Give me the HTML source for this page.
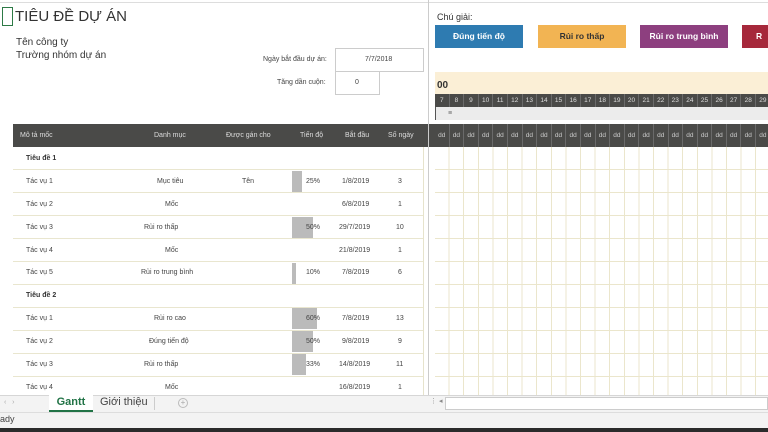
<!DOCTYPE html>
<html><head><meta charset="utf-8"><style>
*{margin:0;padding:0;box-sizing:border-box}
body{width:768px;height:432px;overflow:hidden;background:#fff;font-family:"Liberation Sans","DejaVu Sans",sans-serif;position:relative;color:#333}
.a{position:absolute;white-space:nowrap}
.s{font-size:7px;color:#444}
.hdr{background:#4a4a48}
.flex{display:flex}
.flex div{width:14.6px;flex:none;text-align:center;border-right:1px solid #6a6a6a}
</style></head><body>
<div class="a" style="left:0;top:0;width:768px;height:3px;border-bottom:1px solid #ddd"></div>
<div class="a" style="left:2px;top:7px;width:11px;height:19px;border:1px solid #2d7a46"></div>
<div class="a" style="left:15px;top:8px;font-size:15px;color:#333">TIÊU ĐỀ DỰ ÁN</div>
<div class="a" style="left:16px;top:37px;font-size:10px;color:#333">Tên công ty</div>
<div class="a" style="left:16px;top:50px;font-size:10px;color:#333">Trường nhóm dự án</div>
<div class="a s" style="left:263px;top:56px">Ngày bắt đầu dự án:</div>
<div class="a" style="left:335px;top:48px;width:89px;height:24px;border:1px solid #ccc"></div>
<div class="a s" style="left:365px;top:56px">7/7/2018</div>
<div class="a s" style="left:277px;top:79px">Tăng dần cuộn:</div>
<div class="a" style="left:335px;top:71px;width:45px;height:24px;border:1px solid #ccc"></div>
<div class="a s" style="left:355px;top:79px">0</div>

<div class="a hdr" style="left:13px;top:124px;width:422px;height:23px"></div>
<div class="a s" style="left:20px;top:132px;color:#ddd">Mô tả mốc</div>
<div class="a s" style="left:154px;top:132px;color:#ddd">Danh mục</div>
<div class="a s" style="left:226px;top:132px;color:#ddd">Được gán cho</div>
<div class="a s" style="left:300px;top:132px;color:#ddd">Tiến độ</div>
<div class="a s" style="left:345px;top:132px;color:#ddd">Bắt đầu</div>
<div class="a s" style="left:388px;top:132px;color:#ddd">Số ngày</div>

<div class="a" style="left:13px;top:147px;width:410px;height:248px;background:repeating-linear-gradient(to bottom,transparent 0,transparent 22px,#e9e6cf 22px,#e9e6cf 23px);background-position:0 0"></div>
<div class="a" style="left:423px;top:147px;width:1px;height:248px;background:#e6e3cc"></div>
<div class="a" style="left:428px;top:0;width:1px;height:395px;background:#ccc"></div>

<div class="a s" style="left:26px;top:155px;font-weight:bold;color:#333">Tiêu đề 1</div>
<div class="a s" style="left:26px;top:178px">Tác vụ 1</div><div class="a s" style="left:157px;top:178px">Mục tiêu</div><div class="a s" style="left:242px;top:178px">Tên</div>
<div class="a" style="left:292px;top:171px;width:10px;height:21px;background:#bbb"></div><div class="a s" style="left:306px;top:178px">25%</div><div class="a s" style="left:342px;top:178px">1/8/2019</div><div class="a s" style="left:398px;top:178px">3</div>
<div class="a s" style="left:26px;top:201px">Tác vụ 2</div><div class="a s" style="left:165px;top:201px">Mốc</div><div class="a s" style="left:342px;top:201px">6/8/2019</div><div class="a s" style="left:398px;top:201px">1</div>
<div class="a" style="left:292px;top:217px;width:21px;height:21px;background:#bbb"></div>
<div class="a s" style="left:26px;top:224px">Tác vụ 3</div><div class="a s" style="left:144px;top:224px">Rủi ro thấp</div><div class="a s" style="left:306px;top:224px">50%</div><div class="a s" style="left:339px;top:224px">29/7/2019</div><div class="a s" style="left:396px;top:224px">10</div>
<div class="a s" style="left:26px;top:247px">Tác vụ 4</div><div class="a s" style="left:165px;top:247px">Mốc</div><div class="a s" style="left:339px;top:247px">21/8/2019</div><div class="a s" style="left:398px;top:247px">1</div>
<div class="a" style="left:292px;top:263px;width:4px;height:21px;background:#bbb"></div>
<div class="a s" style="left:26px;top:269px">Tác vụ 5</div><div class="a s" style="left:141px;top:269px">Rủi ro trung bình</div><div class="a s" style="left:306px;top:269px">10%</div><div class="a s" style="left:342px;top:269px">7/8/2019</div><div class="a s" style="left:398px;top:269px">6</div>
<div class="a s" style="left:26px;top:292px;font-weight:bold;color:#333">Tiêu đề 2</div>
<div class="a" style="left:292px;top:308px;width:25px;height:21px;background:#bbb"></div>
<div class="a s" style="left:26px;top:315px">Tác vụ 1</div><div class="a s" style="left:154px;top:315px">Rủi ro cao</div><div class="a s" style="left:306px;top:315px">60%</div><div class="a s" style="left:342px;top:315px">7/8/2019</div><div class="a s" style="left:396px;top:315px">13</div>
<div class="a" style="left:292px;top:331px;width:21px;height:21px;background:#bbb"></div>
<div class="a s" style="left:26px;top:338px">Tác vụ 2</div><div class="a s" style="left:149px;top:338px">Đúng tiến độ</div><div class="a s" style="left:306px;top:338px">50%</div><div class="a s" style="left:342px;top:338px">9/8/2019</div><div class="a s" style="left:398px;top:338px">9</div>
<div class="a" style="left:292px;top:354px;width:14px;height:21px;background:#bbb"></div>
<div class="a s" style="left:26px;top:361px">Tác vụ 3</div><div class="a s" style="left:144px;top:361px">Rủi ro thấp</div><div class="a s" style="left:306px;top:361px">33%</div><div class="a s" style="left:339px;top:361px">14/8/2019</div><div class="a s" style="left:396px;top:361px">11</div>
<div class="a s" style="left:26px;top:384px">Tác vụ 4</div><div class="a s" style="left:165px;top:384px">Mốc</div><div class="a s" style="left:339px;top:384px">16/8/2019</div><div class="a s" style="left:398px;top:384px">1</div>

<div class="a" style="left:437px;top:12px;font-size:9px;color:#333">Chú giải:</div>
<div class="a" style="left:435px;top:25px;width:88px;height:23px;background:#2e7bb1;color:#fff;font-size:8.5px;font-weight:bold;text-align:center;line-height:23px">Đúng tiến độ</div>
<div class="a" style="left:538px;top:25px;width:88px;height:23px;background:#f2b453;color:#333;font-size:8.5px;font-weight:bold;text-align:center;line-height:23px">Rủi ro thấp</div>
<div class="a" style="left:640px;top:25px;width:88px;height:23px;background:#8d3f7f;color:#fff;font-size:8.5px;font-weight:bold;text-align:center;line-height:23px">Rủi ro trung bình</div>
<div class="a" style="left:742px;top:25px;width:30px;height:23px;background:#a6283b;color:#fff;font-size:8.5px;font-weight:bold;line-height:23px;padding-left:14px">R</div>

<div class="a" style="left:435px;top:72px;width:333px;height:22px;background:#fbefd6"></div>
<div class="a" style="left:437px;top:80px;font-size:10px;font-weight:bold;color:#333">00</div>
<div class="a hdr flex" style="left:435px;top:94px;width:333px;height:13px;font-size:6.5px;color:#ddd;line-height:13px;overflow:hidden">
<div>7</div><div>8</div><div>9</div><div>10</div><div>11</div><div>12</div><div>13</div><div>14</div><div>15</div><div>16</div><div>17</div><div>18</div><div>19</div><div>20</div><div>21</div><div>22</div><div>23</div><div>24</div><div>25</div><div>26</div><div>27</div><div>28</div><div>29</div></div>
<div class="a" style="left:435px;top:107px;width:333px;height:13px;background:#ececec;border-left:1px solid #555"></div>
<div class="a" style="left:448px;top:110px;font-size:7px;color:#666">≡</div>
<div class="a hdr flex" style="left:435px;top:124px;width:333px;height:23px;font-size:6.5px;color:#ccc;line-height:23px;overflow:hidden">
<div>dd</div><div>dd</div><div>dd</div><div>dd</div><div>dd</div><div>dd</div><div>dd</div><div>dd</div><div>dd</div><div>dd</div><div>dd</div><div>dd</div><div>dd</div><div>dd</div><div>dd</div><div>dd</div><div>dd</div><div>dd</div><div>dd</div><div>dd</div><div>dd</div><div>dd</div><div>dd</div></div>
<div class="a" style="left:435px;top:147px;width:333px;height:248px;background:repeating-linear-gradient(to right,transparent 0,transparent 13.6px,#ebe6cc 13.6px,#ebe6cc 14.6px),repeating-linear-gradient(to bottom,transparent 0,transparent 22px,#ebe6cc 22px,#ebe6cc 23px)"></div>

<div class="a" style="left:0;top:395px;width:768px;height:17px;background:#f3f3f3;border-top:1px solid #d6d6d6"></div>
<div class="a" style="left:4px;top:399px;font-size:7px;color:#aaa">‹ &nbsp; ›</div>
<div class="a" style="left:49px;top:395px;width:44px;height:17px;background:#fff;border-bottom:2px solid #217346;color:#217346;font-weight:bold;font-size:11px;text-align:center;line-height:15px">Gantt</div>
<div class="a" style="left:100px;top:396px;font-size:11px;color:#444">Giới thiệu</div>
<div class="a" style="left:154px;top:397px;width:1px;height:13px;background:#ccc"></div>
<div class="a" style="left:178px;top:398px;width:10px;height:10px;border:1px solid #bbb;border-radius:50%;font-size:8px;color:#aaa;text-align:center;line-height:8px">+</div>
<div class="a" style="left:430px;top:397px;font-size:7px;color:#888">⋮ ◂</div>
<div class="a" style="left:445px;top:397px;width:323px;height:13px;background:#fff;border:1px solid #ccc"></div>
<div class="a" style="left:0;top:412px;width:768px;height:16px;background:#f3f3f3;border-top:1px solid #ddd"></div>
<div class="a" style="left:0;top:414px;font-size:9px;color:#444">ady</div>
<div class="a" style="left:0;top:428px;width:768px;height:4px;background:#2b2b2b"></div>
</body></html>
